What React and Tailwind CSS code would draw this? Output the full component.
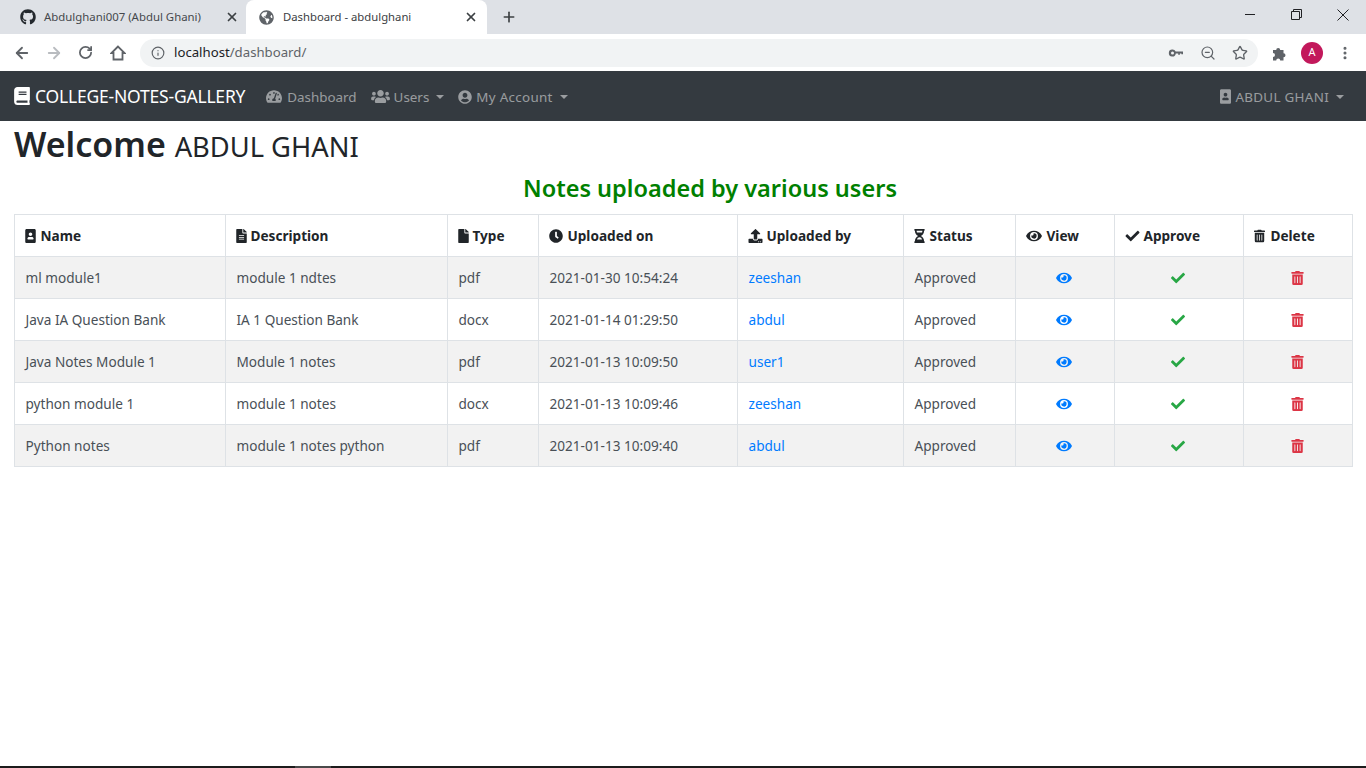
import {
  FaBook, FaTachometerAlt, FaUsers, FaUserCircle, FaPortrait, FaFileAlt, FaFile, FaClock,
  FaUpload, FaHourglassHalf, FaEye, FaCheck, FaTrashAlt, FaGithub, FaGlobeAmericas,
} from 'react-icons/fa';
import { Info, ZoomOut, Star, ArrowLeft, ArrowRight, RotateCw, EllipsisVertical, X, Plus } from 'lucide-react';

const columns = [
  { label: 'Name', icon: FaPortrait, width: 'w-[211px]', iconClass: 'mr-[5px] w-[11px]' },
  { label: 'Description', icon: FaFileAlt, width: 'w-[222px]', iconClass: 'mr-[4px] w-[11px]' },
  { label: 'Type', icon: FaFile, width: 'w-[91px]', iconClass: 'mr-[4px] w-[11px]' },
  { label: 'Uploaded on', icon: FaClock, width: 'w-[199px]', iconClass: 'mr-[5px] w-[14px]' },
  { label: 'Uploaded by', icon: FaUpload, width: 'w-[166px]', iconClass: 'mr-[4px] w-[15px]' },
  { label: 'Status', icon: FaHourglassHalf, width: 'w-[112px]', iconClass: 'mr-[5px] w-[11px]' },
  { label: 'View', icon: FaEye, width: 'w-[99px]', iconClass: 'mr-[5px] w-[16px]' },
  { label: 'Approve', icon: FaCheck, width: 'w-[129px]', iconClass: 'mr-[4px] w-[15px]' },
  { label: 'Delete', icon: FaTrashAlt, width: 'w-[109px]', iconClass: 'mr-[6px] w-[11px]' },
];

const notes = [
  { name: 'ml module1', description: 'module 1 ndtes', type: 'pdf', date: '2021-01-30 10:54:24', user: 'zeeshan' },
  { name: 'Java IA Question Bank', description: 'IA 1 Question Bank', type: 'docx', date: '2021-01-14 01:29:50', user: 'abdul' },
  { name: 'Java Notes Module 1', description: 'Module 1 notes', type: 'pdf', date: '2021-01-13 10:09:50', user: 'user1' },
  { name: 'python module 1', description: 'module 1 notes', type: 'docx', date: '2021-01-13 10:09:46', user: 'zeeshan' },
  { name: 'Python notes', description: 'module 1 notes python', type: 'pdf', date: '2021-01-13 10:09:40', user: 'abdul' },
];

const cell = 'h-[42px] border border-[#dee2e6] pl-[10.5px] pr-[10.5px] pb-0 pt-[2px] align-middle';
const headCell = 'h-[42px] border border-[#dee2e6] pl-[9.5px] pr-[10.5px] pb-0 pt-[2px] align-middle';
const iconCell = 'h-[42px] border border-[#dee2e6] pl-[10px] pr-[12px] py-0 align-middle';

function Caret() {
  return <span className="ml-[7px] inline-block h-0 w-0 border-x-[4.5px] border-t-[4.5px] border-x-transparent border-t-current align-middle" />;
}

function BrowserChrome() {
  return (
    <div className="font-['Noto_Sans',sans-serif] text-[#3c4043]">
      <div className="flex h-[34px] items-end bg-[#dee1e6]">
        <div className="flex h-[34px] w-[246px] items-center pl-[20px] pr-[7px]">
          <FaGithub className="h-4 w-4 text-[#24292e]" />
          <span className="ml-2 flex-1 text-[11.4px] text-[#45484c]">Abdulghani007 (Abdul Ghani)</span>
          <X className="h-3.5 w-3.5 text-[#3c4043]" strokeWidth={3} />
        </div>
        <div className="flex h-[34px] w-[241px] items-center rounded-t-[8px] bg-white pl-[13px] pr-[9px]">
          <FaGlobeAmericas className="h-[15px] w-[15px] text-[#5f6368]" />
          <span className="ml-[9px] flex-1 text-[11.3px] text-[#3c4043]">Dashboard - abdulghani</span>
          <X className="h-3.5 w-3.5 text-[#3c4043]" strokeWidth={3} />
        </div>
        <div className="flex h-[34px] items-center pl-[14px]">
          <Plus className="h-[16px] w-[16px] text-[#3c4043]" strokeWidth={2.5} />
        </div>
        <div className="ml-auto flex h-[34px] items-start pt-[9px] text-[#202124]">
          <svg className="mr-[35px] h-[12px] w-[12px]" viewBox="0 0 12 12" fill="none" stroke="currentColor">
            <path d="M1 5.5h10" />
          </svg>
          <svg className="mr-[35px] h-[11px] w-[11px]" viewBox="0 0 11 11" fill="none" stroke="currentColor">
            <path d="M.5 2.5h8v8h-8zM2.5 2.5v-2h8v8h-2" />
          </svg>
          <svg className="mr-[17px] h-[12px] w-[12px]" viewBox="0 0 12 12" fill="none" stroke="currentColor">
            <path d="M.5.5l11 11M11.5.5l-11 11" />
          </svg>
        </div>
      </div>
      <div className="flex h-[37px] items-center bg-white text-[#5f6368]">
        <ArrowLeft className="ml-[13px] h-[18px] w-[18px]" strokeWidth={2.4} />
        <ArrowRight className="ml-[14px] h-[18px] w-[18px] text-[#b9bcc0]" strokeWidth={2.4} />
        <RotateCw className="ml-[15px] h-[15px] w-[15px]" strokeWidth={2.8} />
        <svg className="ml-[17px] h-[16px] w-[16px]" viewBox="0 0 16 16" fill="none" stroke="currentColor" strokeWidth="1.8">
          <path d="M8 1.5L1.5 8h2v6.5h9V8h2z" strokeLinejoin="miter" />
        </svg>
        <div className="ml-[14px] flex h-[28px] w-[1118px] items-center rounded-full bg-[#f1f3f4] pl-[11px] pr-[10px]">
          <Info className="h-[14px] w-[14px]" strokeWidth={2} />
          <span className="ml-[9px] text-[13.2px]">
            <span className="text-[#202124]">localhost</span>/dashboard/
          </span>
          <svg className="ml-auto h-[16px] w-[16px]" viewBox="0 0 16 16" fill="currentColor">
            <path d="M4.5 4.5a3.5 3.5 0 0 1 3.2 2H15v2.8h-1.6V8.4h-1.5v1.4h-1.7V8.4H7.8a3.5 3.5 0 1 1-3.3-3.9zm0 2a1.5 1.5 0 1 0 0 3 1.5 1.5 0 0 0 0-3z" />
          </svg>
          <ZoomOut className="ml-[16px] h-[16px] w-[16px]" strokeWidth={1.8} />
          <Star className="ml-[16px] h-[16px] w-[16px]" strokeWidth={2} />
        </div>
        <svg className="ml-[14px] h-[16px] w-[16px]" viewBox="0 0 16 16" fill="currentColor">
          <path d="M1 5h3.2a2 2 0 1 1 4 0H11.5v3.3a2 2 0 1 1 0 4V15.5H8.2a2 2 0 1 0-4 0H1v-3.6a2 2 0 1 0 0-4z" />
        </svg>
        <div className="ml-[13px] flex h-[22px] w-[22px] items-center justify-center rounded-full bg-[#c2185b] text-[11px] text-white">A</div>
        <EllipsisVertical className="ml-[14px] h-[16px] w-[16px]" strokeWidth={2.6} />
      </div>
    </div>
  );
}

function Navbar() {
  const link = 'flex items-center pt-[2px] text-[13.4px] text-white/50';
  return (
    <nav className="flex h-[50px] items-center bg-[#343a40] pl-[14px] pr-[22px]">
      <span className="flex items-center text-[17.5px] tracking-[-0.2px] text-white">
        <FaBook className="mr-[5px] h-[18px] w-[16px]" />
        COLLEGE-NOTES-GALLERY
      </span>
      <span className={`${link} ml-[21px]`}>
        <FaTachometerAlt className="mr-[5px] h-[15px] w-[16px]" />
        Dashboard
      </span>
      <span className={`${link} ml-[14px]`}>
        <FaUsers className="mr-[4px] h-[15px] w-[19px]" />
        Users
        <Caret />
      </span>
      <span className={`${link} ml-[14px] tracking-[0.3px]`}>
        <FaUserCircle className="mr-[4px] h-[14px] w-[14px]" />
        My Account
        <Caret />
      </span>
      <span className={`${link} ml-auto tracking-[0.3px]`}>
        <FaPortrait className="mr-[4px] h-[15px] w-[11px]" />
        ABDUL GHANI
        <Caret />
      </span>
    </nav>
  );
}

export default function App() {
  return (
    <div className="flex h-[768px] flex-col overflow-hidden bg-white font-['Noto_Sans',sans-serif] text-[#212529]">
      <BrowserChrome />
      <Navbar />
      <main className="flex-1 px-[14px]">
        <h1 className="h-[47px] text-[34px] leading-[47px] font-semibold">
          Welcome <small className="text-[27.3px] font-normal">ABDUL GHANI</small>
        </h1>
        <h3 className="h-[46px] pl-[54px] text-center text-[23.5px] leading-[40px] font-semibold text-[#008000]">
          Notes uploaded by various users
        </h3>
        <table className="w-[1338px] table-fixed border-collapse text-[13.6px] text-[#495057]">
          <thead>
            <tr>
              {columns.map(({ label, icon: Icon, width, iconClass }) => (
                <th key={label} className={`${headCell} ${width} text-left font-bold text-[#212529]`}>
                  <span className="flex items-center">
                    <Icon className={`${iconClass} h-[14px] shrink-0`} />
                    {label}
                  </span>
                </th>
              ))}
            </tr>
          </thead>
          <tbody>
            {notes.map((note, i) => (
              <tr key={note.date} className={i % 2 === 0 ? 'bg-[#f2f2f2]' : 'bg-white'}>
                <td className={cell}>{note.name}</td>
                <td className={cell}>{note.description}</td>
                <td className={cell}>{note.type}</td>
                <td className={cell}>{note.date}</td>
                <td className={`${cell} text-[#007bff]`}>{note.user}</td>
                <td className={cell}>Approved</td>
                <td className={iconCell}><FaEye className="mx-auto h-[14px] w-[16px] text-[#007bff]" /></td>
                <td className={iconCell}><FaCheck className="mx-auto h-[14px] w-[14px] text-[#28a745]" /></td>
                <td className={iconCell}><FaTrashAlt className="mx-auto h-[14px] w-[13px] text-[#dc3545]" /></td>
              </tr>
            ))}
          </tbody>
        </table>
      </main>
      <div className="flex h-[2px] bg-[#1c1c1c]">
        <div className="ml-[295px] w-[36px] bg-[#4a4a4a]" />
      </div>
    </div>
  );
}
